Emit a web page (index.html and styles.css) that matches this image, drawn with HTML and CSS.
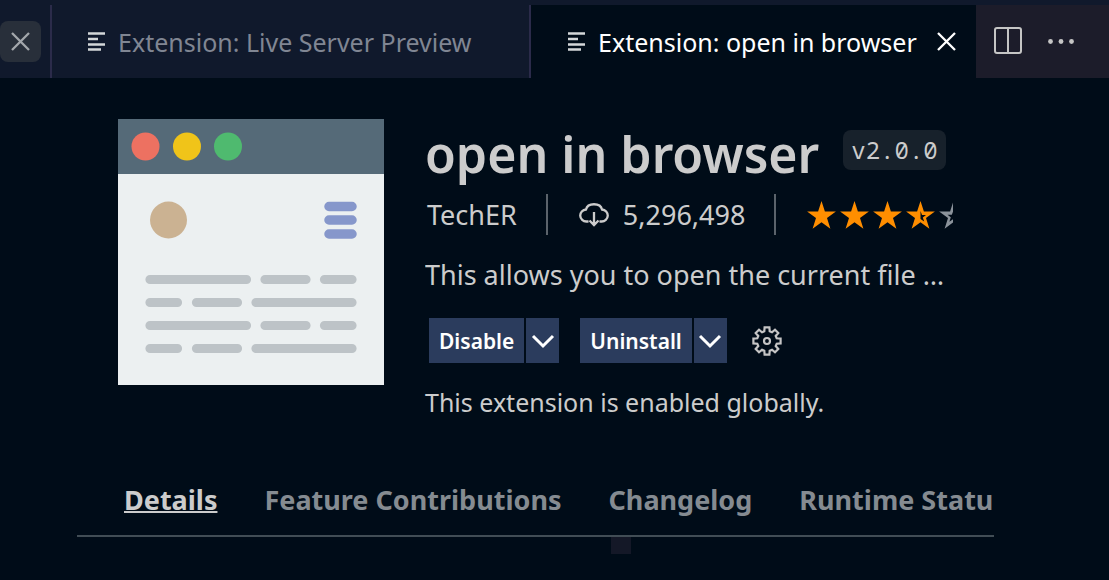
FILE: index.html
```html
<!DOCTYPE html>
<html lang="en">
<head>
<meta charset="utf-8">
<title>Extension: open in browser</title>
<link rel="stylesheet" href="styles.css">
</head>
<body>
<header class="tabbar">
  <div class="tab tab-cut">
    <button class="close close-filled" type="button" aria-label="Close tab"><svg width="20" height="20" viewBox="0 0 20 20"><path d="M1 1l17 17M18 1l-17 17"/></svg></button>
  </div>
  <div class="tab tab-preview">
    <svg class="lines" width="18" height="20" viewBox="0 0 18 20"><path d="M0 1.500h17M0 7h10M0 12.500h17M0 17.500h13"/></svg>
    <span class="tab-title">Extension: Live Server Preview</span>
  </div>
  <div class="tab tab-active">
    <svg class="lines" width="18" height="20" viewBox="0 0 18 20"><path d="M0 1.500h17M0 7h10M0 12.500h17M0 17.500h13"/></svg>
    <span class="tab-title">Extension: open in browser</span>
    <button class="close" type="button" aria-label="Close tab"><svg width="20" height="20" viewBox="0 0 20 20"><path d="M1 1l17 17M18 1l-17 17"/></svg></button>
  </div>
  <div class="actions">
    <button type="button" aria-label="Split editor"><svg width="28" height="30" viewBox="0 0 28 30"><path d="M3 1h22q2 0 2 2v21q0 2-2 2h-22q-2 0-2-2v-21q0-2 2-2zM14 1v25" fill="none" stroke="#c5c5c5" stroke-width="2"/></svg></button>
    <button type="button" aria-label="More actions"><svg width="26" height="28" viewBox="0 0 26 28"><g fill="#c5c5c5"><circle cx="2.500" cy="13.500" r="2.400"/><circle cx="13" cy="13.500" r="2.400"/><circle cx="23.500" cy="13.500" r="2.400"/></g></svg></button>
  </div>
</header>
<main class="editor">
  <section class="summary">
    <svg class="logo" width="266" height="266" viewBox="0 0 266 266" role="img" aria-label="open in browser logo">
      <path fill="#ecf0f1" d="M0 0h266v266H0z"/><path fill="#556a78" d="M0 0h266v55H0z"/>
      <circle cx="27.500" cy="27.500" r="14" fill="#ed7161"/><circle cx="69" cy="27.500" r="14" fill="#f0c419"/><circle cx="110" cy="27.500" r="14" fill="#4fba6f"/>
      <circle cx="50.500" cy="101" r="18.500" fill="#cbb292"/>
      <path d="M211 87.500h23M211 101h23M211 115h23" stroke="#8697cb" stroke-width="9.500" stroke-linecap="round"/>
      <path d="M32 160.500h96.500M147 160.500h41M206.500 160.500h27.500M32 183.500h27.500M78.500 183.500h41M138 183.500h96M32 206.500h96.500M147 206.500h41M206.500 206.500h27.500M32 229.500h27.500M78.500 229.500h41M138 229.500h96" stroke="#bdc3c7" stroke-width="9.200" stroke-linecap="round"/>
    </svg>
    <div class="details">
      <div class="heading"><h1>open in browser</h1><code class="version">v2.0.0</code></div>
      <div class="meta">
        <span class="publisher">TechER</span>
        <span class="installs"><svg width="30" height="24" viewBox="0 0 30 24"><path d="M9.500 18.500H7.500a6 6 0 0 1-.500-12c1.500-7 14.500-7 16 0a6 6 0 0 1-.500 12H20.500M15 9v12.500M10.500 17.500L15 22l4.500-4.500" fill="none" stroke="#ccc" stroke-width="2.300"/></svg>5,296,498</span>
        <span class="rating" role="img" aria-label="3.5 stars">
          <svg width="146" height="30" viewBox="0 0 146 30">
            <defs><path id="star" d="M14.500 0l3.400 10.600h11L20 17.100l3.400 10.600-8.900-6.500-8.900 6.500L9 17.100.100 10.600h11z"/></defs>
            <g fill="#ff8e00"><use href="#star"/><use href="#star" x="33"/><use href="#star" x="66"/><use href="#star" x="99"/></g>
            <path fill="#000c18" d="M113.500 10l1.500 4h4l-3.200 2.400 1.400 4.200-3.700-2.600z"/>
            <use href="#star" x="132" fill="#8b939b"/>
            <path fill="#000c18" d="M146.500 9.500l-1.700 4.300h-4.300l3.300 2.500-1.400 4.400 4.100-2.900z"/>
          </svg>
        </span>
      </div>
      <p class="description">This allows you to open the current file …</p>
      <div class="buttons">
        <div class="split"><button class="main" type="button">Disable</button><button class="drop" type="button" aria-label="Disable options"><svg width="24" height="16" viewBox="0 0 24 16"><path d="M2 3l10 10L22 3"/></svg></button></div>
        <div class="split"><button class="main" type="button">Uninstall</button><button class="drop" type="button" aria-label="Uninstall options"><svg width="24" height="16" viewBox="0 0 24 16"><path d="M2 3l10 10L22 3"/></svg></button></div>
        <button class="gear" type="button" aria-label="Manage"><svg width="30" height="30" viewBox="-15 -15 30 30"><g fill="none" stroke="#c5c5c5" stroke-width="2.200"><path d="M2.400-13.600L2.700-9.700 5-8.700 8-11.300 11.300-8 8.700-5 9.700-2.700 13.600-2.400V2.400L9.700 2.700 8.700 5 11.300 8 8 11.300 5 8.700 2.700 9.700 2.400 13.600H-2.400L-2.700 9.700-5 8.700-8 11.300-11.300 8-8.700 5-9.700 2.700-13.600 2.400V-2.400L-9.700-2.700-8.700-5-11.300-8-8-11.300-5-8.700-2.700-9.700-2.400-13.600z"/><circle r="3"/></g></svg></button>
      </div>
      <p class="status">This extension is enabled globally.</p>
    </div>
  </section>
  <nav class="sections">
    <a class="current" href="#details">Details</a><a href="#contributions">Feature Contributions</a><a href="#changelog">Changelog</a><a href="#runtime">Runtime Statu</a>
  </nav>
  <div class="marker"></div>
</main>
</body>
</html>
```
FILE: styles.css
```css
* { box-sizing: border-box; }
body { margin: 0; min-height: 100vh; background: #000c18; color: #ccc; font-family: "Segoe UI", "Noto Sans", sans-serif; }
button { padding: 0; border: 0; background: none; color: inherit; font: inherit; display: flex; align-items: center; justify-content: center; }
svg { display: block; flex: none; }
h1, p { margin: 0; }
.tabbar { display: flex; height: 78px; padding-top: 5px; background: #10192c; }
.tab { display: flex; align-items: center; border-right: 2px solid #2b2b4a; color: #808693; font-size: 25px; white-space: nowrap; }
.tab-cut { flex: 0 0 52px; }
.tab-preview { flex: 0 0 479px; padding-left: 36px; }
.tab-active { flex: 1; padding-left: 37px; border-right: 0; background: #000c18; color: #fff; }
.lines { margin-right: 12px; fill: none; stroke: #d4d7d9; stroke-width: 2.5; }
.close { margin-left: 20px; }
.close svg { fill: none; stroke: #fff; stroke-width: 2.3; }
.close-filled { width: 41px; height: 41px; margin: 0; border-radius: 8px; background: #282f3a; }
.close-filled svg { stroke: #a3a7ac; }
.actions { display: flex; flex: 0 0 133px; align-items: center; gap: 26px; padding-left: 18px; background: #1c1c2a; }
.editor { padding: 41px 115px 0 77px; }
.summary { display: flex; gap: 41px; padding: 0 41px; }
.logo { flex: none; }
.details { flex: 1; min-width: 0; }
.heading { display: flex; align-items: flex-start; gap: 24px; height: 70px; }
h1 { font-size: 50px; font-weight: 600; line-height: 70px; white-space: nowrap; }
.version { margin-top: 11px; padding: 0 8px; border-radius: 8px; background: #17212b; font: 24px/40px "Noto Sans Mono", "DejaVu Sans Mono", monospace; }
.meta { display: flex; height: 41px; margin-top: 5px; padding-left: 2px; overflow: hidden; font-size: 27px; line-height: 42px; white-space: nowrap; }
.publisher, .installs { padding-right: 29px; border-right: 2px solid #5b636b; }
.installs { display: flex; align-items: center; gap: 14px; padding-left: 31px; }
.rating { display: flex; align-items: center; padding: 2px 0 0 31px; }
.description { margin-top: 20px; overflow: hidden; font-size: 27px; line-height: 40px; text-overflow: ellipsis; white-space: nowrap; }
.buttons { display: flex; gap: 21px; margin: 23px 0 0 4px; }
.split { display: flex; gap: 2px; height: 45px; color: #fff; font-size: 21px; font-weight: 600; }
.main { padding: 0 10px; background: #2b3c5d; }
.drop { width: 33px; background: #2b3c5d; }
.drop svg { fill: none; stroke: #fff; stroke-width: 3; }
.gear { margin-left: 4px; }
.status { margin-top: 20px; font-size: 25px; line-height: 38px; }
.sections { display: flex; gap: 47px; height: 75px; margin-top: 41px; padding-left: 47px; overflow: hidden; border-bottom: 2px solid #414d55; font-size: 27px; font-weight: 700; line-height: 76px; white-space: nowrap; }
.sections a { color: #858b91; text-decoration: none; }
.sections .current { color: #ccc; text-decoration: underline; text-decoration-thickness: 2px; }
.marker { width: 20px; height: 17px; margin-left: 534px; background: #141827; }
```
